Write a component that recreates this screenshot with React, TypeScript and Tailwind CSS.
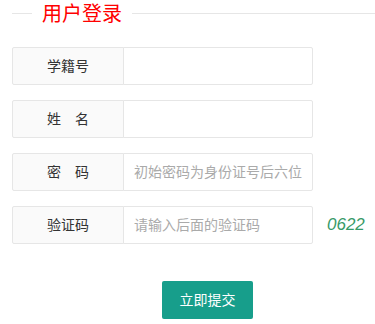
import React from "react";

const font = { fontFamily: '"Liberation Sans", "Noto Sans CJK SC", sans-serif' };

function Row({ label, placeholder, extra }: { label: string; placeholder?: string; extra?: React.ReactNode }) {
  return (
    <div className="flex items-center">
      <div className="flex w-[301px] h-[38px]">
        <div className="w-[112px] h-[38px] shrink-0 border border-[#e6e6e6] bg-[#fafafa] rounded-l-[2px] flex items-center justify-center text-[14px] text-[#333]">
          {label}
        </div>
        <input
          className="-ml-px flex-1 min-w-0 h-[38px] border border-[#e6e6e6] rounded-r-[2px] bg-white pl-[10px] text-[14px] text-[#333] outline-none placeholder:text-[#aaa]"
          placeholder={placeholder}
          style={font}
        />
      </div>
      {extra}
    </div>
  );
}

export default function App() {
  return (
    <div className="w-[375px] h-[324px] bg-white overflow-hidden" style={font}>
      <div className="flex h-[28px]">
        <div className="ml-[12px] w-[20px] h-px bg-[#e6e6e6] mt-[13px]" />
        <div className="px-[10px] text-[20px] leading-[29px] text-[#ff0000]">用户登录</div>
        <div className="flex-1 h-px bg-[#e6e6e6] mt-[13px]" />
      </div>
      <div className="mt-[19px] ml-[12px] flex flex-col gap-[15px]">
        <Row label="学籍号" />
        <Row label="姓　名" />
        <Row label="密　码" placeholder="初始密码为身份证号后六位" />
        <Row
          label="验证码"
          placeholder="请输入后面的验证码"
          extra={<span className="ml-[14px] text-[17px] italic text-[#389a68]">0622</span>}
        />
      </div>
      <button className="mt-[37px] ml-[162px] h-[38px] w-[91px] rounded-[2px] bg-[#179e8b] text-white text-[14px]" style={font}>
        立即提交
      </button>
    </div>
  );
}
